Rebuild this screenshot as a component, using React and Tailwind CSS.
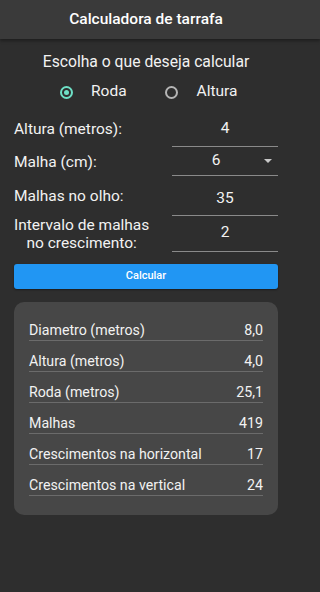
import React from "react";

const inputs = [
  { label: "Altura (metros):", value: "4", h: "h-[36px]" },
  { label: "Malha (cm):", value: "6", h: "h-[29px]", select: true },
  { label: "Malhas no olho:", value: "35", h: "h-[40px] pt-[6px]" },
  { label: "Intervalo de malhas\nno crescimento:", value: "2", h: "h-[36px] pb-[2px]" },
];

const results = [
  ["Diametro (metros)", "8,0"],
  ["Altura (metros)", "4,0"],
  ["Roda (metros)", "25,1"],
  ["Malhas", "419"],
  ["Crescimentos na horizontal", "17"],
  ["Crescimentos na vertical", "24"],
];

const App = () => {
  return (
    <div className="min-h-screen w-full bg-[#2e2e2e] text-[#f2f2f2] font-['Roboto',sans-serif] overflow-hidden">
      <div className="h-[39px] bg-[#3a3a3a] shadow-[0_2px_3px_rgba(0,0,0,0.35)]">
        <div className="w-[292px] h-full flex items-center justify-center">
          <h1 className="text-[15.5px] font-medium text-white">Calculadora de tarrafa</h1>
        </div>
      </div>

      <div className="w-[292px] px-[14px]">
        <p className="mt-[13px] text-[15.7px] leading-[20px] text-center">
          Escolha o que deseja calcular
        </p>

        <div className="mt-[8px] h-[24px] flex items-center">
          <div className="ml-[46px] flex items-center">
            <span className="w-[13px] h-[13px] rounded-full border-2 border-[#6ee0c6] flex items-center justify-center">
              <span className="w-[5px] h-[5px] rounded-full bg-[#6ee0c6]" />
            </span>
            <span className="ml-[18px] text-[15.5px]">Roda</span>
          </div>
          <div className="ml-[38px] flex items-center">
            <span className="w-[13px] h-[13px] rounded-full border-2 border-[#b5b5b5]" />
            <span className="ml-[19px] text-[15.5px]">Altura</span>
          </div>
        </div>

        <div className="mt-[7px] flex flex-col">
          {inputs.map((row) => (
            <div key={row.label} className="flex items-center">
              <div className="flex-1 text-[15.5px] leading-[18px]">
                <span className="inline-block whitespace-pre-line text-center">{row.label}</span>
              </div>
              <div
                className={`w-[106px] ${row.h} border-b border-[#8a8a8a] flex items-center justify-center relative text-[15.5px]`}
              >
                <span className={row.select ? "-ml-[18px]" : ""}>{row.value}</span>
                {row.select && (
                  <span className="absolute right-[6px] top-1/2 -translate-y-1/2 w-0 h-0 border-l-[4px] border-r-[4px] border-t-[4px] border-l-transparent border-r-transparent border-t-[#c8c8c8]" />
                )}
              </div>
            </div>
          ))}
        </div>

        <button className="mt-[12px] w-full h-[25px] rounded-[3px] bg-[#2196f3] text-white text-[11px] font-medium shadow-[0_1px_2px_rgba(0,0,0,0.4)]">
          Calcular
        </button>

        <div className="mt-[13px] bg-[#474747] rounded-[10px] px-[15px] pt-[8px] pb-[19px]">
          {results.map(([k, v]) => (
            <div
              key={k}
              className="h-[31px] flex items-end justify-between border-b-[1.5px] border-[#6b6b6b] text-[14.2px] leading-[18px] pb-[1px]"
            >
              <span>{k}</span>
              <span>{v}</span>
            </div>
          ))}
        </div>
      </div>
    </div>
  );
};

export default App;
